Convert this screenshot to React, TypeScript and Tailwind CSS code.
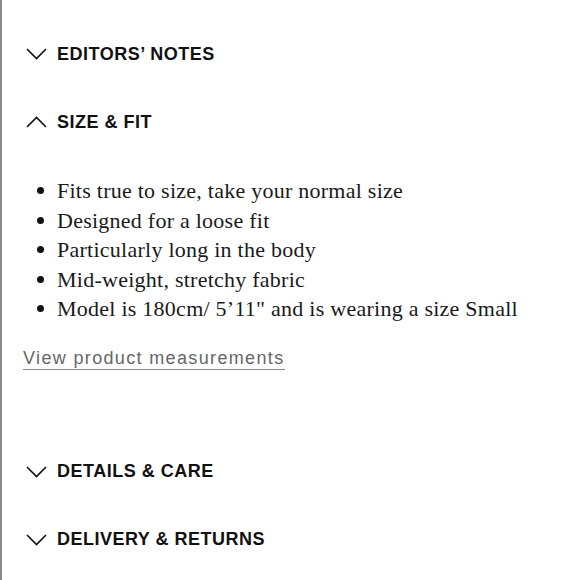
import React from 'react';

const Chevron = ({ up }: { up?: boolean }) => (
  <svg width="21" height="12" viewBox="0 0 21 12" fill="none" className="shrink-0">
    <path
      d={up ? 'M1 11L10.5 1.5L20 11' : 'M1 1L10.5 10.5L20 1'}
      stroke="#111"
      strokeWidth="1.6"
    />
  </svg>
);

const Heading = ({ label, up }: { label: string; up?: boolean }) => (
  <div className="flex h-[36px] items-center gap-[10px] pl-[24px]">
    <Chevron up={up} />
    <span className="text-[18px] font-bold tracking-[0.5px] text-[#111]">{label}</span>
  </div>
);

const fits = [
  'Fits true to size, take your normal size',
  'Designed for a loose fit',
  'Particularly long in the body',
  'Mid-weight, stretchy fabric',
  'Model is 180cm/ 5’11" and is wearing a size Small',
];

export default function App() {
  return (
    <div
      className="h-[580px] w-[580px] border-l-2 border-[#8a8a8a] bg-white"
      style={{ fontFamily: '"Liberation Sans", Arial, sans-serif' }}
    >
      <div className="pt-[36px]">
        <Heading label="EDITORS’ NOTES" />
        <div className="mt-[32px]">
          <Heading label="SIZE & FIT" up />
        </div>
        <ul className="mt-[36px] pl-[35px] text-[22px] leading-[29.5px] tracking-[0.25px] text-[#1a1a1a] font-['Liberation_Serif',serif]">
          {fits.map((f) => (
            <li key={f} className="flex items-center gap-[13px]">
              <span className="h-[7px] w-[7px] rounded-full bg-[#111]" />
              <span>{f}</span>
            </li>
          ))}
        </ul>
        <div className="mt-[21px] pl-[21px]">
          <span className="border-b-[1.5px] border-[#888] pb-[1px] text-[18px] tracking-[1.35px] text-[#666]">
            View product measurements
          </span>
        </div>
        <div className="mt-[82px]">
          <Heading label="DETAILS & CARE" />
        </div>
        <div className="mt-[32px]">
          <Heading label="DELIVERY & RETURNS" />
        </div>
      </div>
    </div>
  );
}
